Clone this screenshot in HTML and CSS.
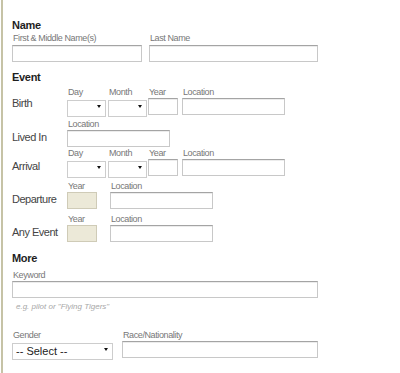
FILE: index.html
```html
<!DOCTYPE html>
<html lang="en">
<head>
  <meta charset="UTF-8" />
  <title>Search Form</title>
  <link rel="stylesheet" href="styles.css">
</head>
<body>
  <div class="page">
    <h2 class="head head-name">Name</h2>
    <div class="row">
      <div class="field">
        <label class="small">First &amp; Middle Name(s)</label>
        <input type="text" class="w-first" />
      </div>
      <div class="field gap-name">
        <label class="small">Last Name</label>
        <input type="text" class="w-last" />
      </div>
    </div>

    <h2 class="head head-event">Event</h2>

    <div class="row ev ev-birth">
      <span class="rowlabel">Birth</span>
      <div class="field">
        <label class="small">Day</label>
        <span class="sel w-day"><select></select></span>
      </div>
      <div class="field g2">
        <label class="small">Month</label>
        <span class="sel w-day"><select></select></span>
      </div>
      <div class="field g1">
        <label class="small">Year</label>
        <input type="text" class="w-year" />
      </div>
      <div class="field g4">
        <label class="small">Location</label>
        <input type="text" class="w-loc" />
      </div>
    </div>

    <div class="row ev ev-lived">
      <span class="rowlabel">Lived In</span>
      <div class="field">
        <label class="small">Location</label>
        <input type="text" class="w-loc" />
      </div>
    </div>

    <div class="row ev ev-arrival">
      <span class="rowlabel">Arrival</span>
      <div class="field">
        <label class="small">Day</label>
        <span class="sel w-day"><select></select></span>
      </div>
      <div class="field g2">
        <label class="small">Month</label>
        <span class="sel w-day"><select></select></span>
      </div>
      <div class="field g1">
        <label class="small">Year</label>
        <input type="text" class="w-year" />
      </div>
      <div class="field g4">
        <label class="small">Location</label>
        <input type="text" class="w-loc" />
      </div>
    </div>

    <div class="row ev ev-depart">
      <span class="rowlabel">Departure</span>
      <div class="field">
        <label class="small">Year</label>
        <input type="text" class="w-year" disabled />
      </div>
      <div class="field g13">
        <label class="small">Location</label>
        <input type="text" class="w-loc" />
      </div>
    </div>

    <div class="row ev ev-any">
      <span class="rowlabel">Any Event</span>
      <div class="field">
        <label class="small">Year</label>
        <input type="text" class="w-year" disabled />
      </div>
      <div class="field g13">
        <label class="small">Location</label>
        <input type="text" class="w-loc" />
      </div>
    </div>

    <h2 class="head head-more">More</h2>
    <div class="field keyword">
      <label class="small">Keyword</label>
      <input type="text" class="w-key" />
    </div>
    <p class="hint">e.g. pilot or "Flying Tigers"</p>

    <div class="row row-gender">
      <div class="field">
        <label class="small">Gender</label>
        <span class="sel w-gender"><select><option>-- Select --</option></select></span>
      </div>
      <div class="field g9">
        <label class="small">Race/Nationality</label>
        <input type="text" class="w-race" />
      </div>
    </div>
  </div>
</body>
</html>
```

FILE: styles.css
```css
html, body { margin: 0; padding: 0; background: #fff; }
body { font-family: "Liberation Sans", Arial, sans-serif; color: #444; }
.page {
  margin-left: 1px; border-left: 2px solid #c6c3a6;
  padding: 19px 0 0 9px; height: 354px;
}
.head {
  margin: 0; font-size: 11px; line-height: 13px; font-weight: bold;
  color: #1e1e1e; letter-spacing: -0.3px;
}
.head-event { margin-top: 9px; }
.head-more { margin-top: 10px; }
.row { display: flex; align-items: flex-start; }
.field { display: flex; flex-direction: column; }
.small {
  display: block; font-size: 9px; line-height: 12px; color: #777;
  letter-spacing: -0.4px; padding-left: 1px; height: 12px;
}
.head-name + .row .small { height: 13px; line-height: 13px; }
.rowlabel {
  width: 55px; flex: none; padding-top: 11px; line-height: 17px;
  font-size: 11px; color: #444; letter-spacing: -0.5px;
}
.ev-birth { margin-top: 2px; }
.ev-birth .rowlabel { padding-top: 9px; }
.ev-lived { margin-top: 3px; }
.ev-depart, .ev-any { margin-top: 4px; }
.gap-name { margin-left: 7px; }
.g1 { margin-left: 1px; }
.g2 { margin-left: 2px; }
.g4 { margin-left: 4px; }
.g9 { margin-left: 9px; }
.g13 { margin-left: 13px; }

input {
  height: 17px; box-sizing: border-box; margin: 0; padding: 0 2px;
  border: 1px solid #c8c8c8; border-top-color: #a4a4a4;
  box-shadow: inset 0 1px 0 #ececec; background: #fff;
}
input:disabled { background: #ece9d8; border-color: #cfcbb7; box-shadow: none; }
.w-first { width: 130px; }
.w-last { width: 169px; }
.w-year { width: 30px; }
.w-loc { width: 103px; }
.w-key { width: 306px; }
.w-race { width: 196px; }

.sel { position: relative; display: block; height: 17px; }
.sel select {
  appearance: none; -webkit-appearance: none; width: 100%; height: 17px;
  box-sizing: border-box; margin: 0; padding: 0 0 0 3px;
  border: 1px solid #cdcdcd; background: #fff; border-radius: 0;
  font-family: "Liberation Sans", Arial, sans-serif; font-size: 11px; color: #222;
}
.sel::after {
  content: ""; position: absolute; right: 5px; top: 7px;
  border-left: 2.5px solid transparent; border-right: 2.5px solid transparent;
  border-top: 3px solid #111;
}
.w-day { width: 39px; }
.w-gender { width: 101px; }

.keyword { margin-top: 4px; }
.hint {
  margin: 3px 0 0 4px; font-size: 8px; line-height: 11px; font-style: italic;
  color: #a8a8a8;
}
.row-gender { margin-top: 17px; }
```
